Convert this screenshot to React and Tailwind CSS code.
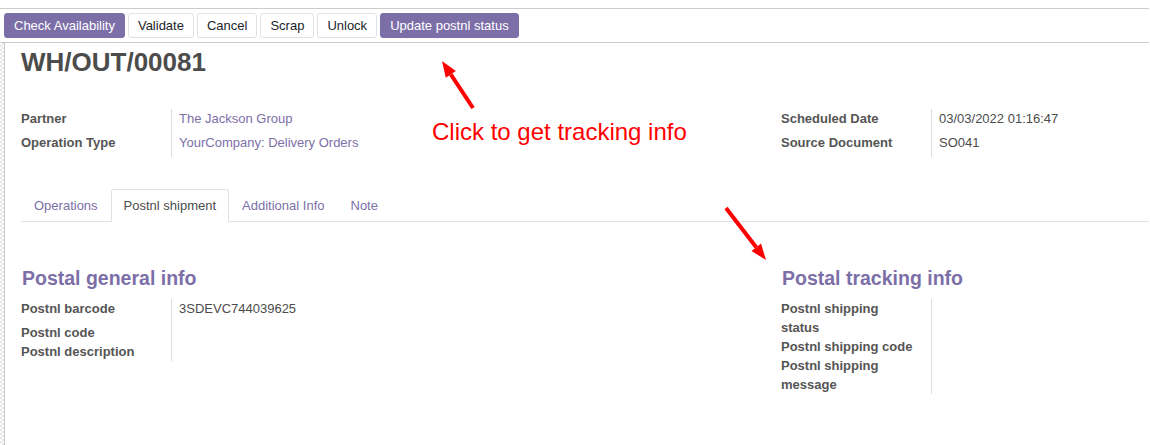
import React from 'react';

const PURPLE = 'text-[#7c6fa8]';

const buttons = [
  { label: 'Check Availability', primary: true },
  { label: 'Validate' },
  { label: 'Cancel' },
  { label: 'Scrap' },
  { label: 'Unlock' },
  { label: 'Update postnl status', primary: true },
];

const tabs = ['Operations', 'Postnl shipment', 'Additional Info', 'Note'];

function Field({ label, value, link, tall }) {
  return (
    <div className={`flex ${tall ? 'min-h-[24px]' : ''}`}>
      <div className="w-[150px] shrink-0 pr-[15px] font-bold leading-[19px] text-[#555555]">{label}</div>
      <div className={`flex-1 border-l border-[#dcdcdc] pl-[7px] leading-[19px] ${link ? PURPLE : 'text-[#4c4c4c]'}`}>
        {value}
      </div>
    </div>
  );
}

function Arrow({ tail, tip, base1, base2, baseC }) {
  return (
    <g>
      <line x1={tail[0]} y1={tail[1]} x2={baseC[0]} y2={baseC[1]} stroke="#ff0000" strokeWidth="4" />
      <polygon points={`${tip[0]},${tip[1]} ${base1[0]},${base1[1]} ${base2[0]},${base2[1]}`} fill="#ff0000" />
    </g>
  );
}

export default function App() {
  return (
    <div className="relative flex min-h-[445px] w-[1149px] flex-col bg-white font-['Liberation_Sans',Arial,sans-serif] text-[13px] text-[#4c4c4c]">
      {/* control panel */}
      <div className="h-[8px]" />
      <div className="flex gap-[3px] border-y border-[#cccccc] px-[4px] pt-[4px] pb-[4px]">
        {buttons.map(b => (
          <button
            key={b.label}
            className={`h-[25px] rounded-[3px] border px-[9px] leading-[23px] ${
              b.primary
                ? 'border-[#7c6fa8] bg-[#7c6fa8] text-white'
                : 'border-[#dee2e6] bg-white text-[#212529]'
            }`}
          >
            {b.label}
          </button>
        ))}
      </div>

      <div className="flex flex-1">
        {/* left sheet edge */}
        <div className="w-[5px] shrink-0 border-r border-[#c8c8c8] bg-[repeating-conic-gradient(#e6e6e6_0%_25%,#ffffff_0%_50%)] bg-[length:4px_4px]" />

        <div className="flex-1 pl-[16px]">
          <h1 className="mt-[4px] text-[26px] font-bold leading-[30px] text-[#4c4c4c]">WH/OUT/00081</h1>

          {/* main fields */}
          <div className="mt-[32px] flex">
            <div className="w-[760px]">
              <Field label="Partner" value="The Jackson Group" link tall />
              <Field label="Operation Type" value="YourCompany: Delivery Orders" link tall />
            </div>
            <div className="w-[360px]">
              <Field label="Scheduled Date" value="03/03/2022 01:16:47" tall />
              <Field label="Source Document" value="SO041" tall />
            </div>
          </div>

          {/* tabs */}
          <div className="mt-[32px] flex h-[33px] border-b border-[#dee2e6]">
            {tabs.map(t => {
              const active = t === 'Postnl shipment';
              return (
                <div
                  key={t}
                  className={`h-[33px] rounded-t-[3px] border px-[12px] pt-[6px] leading-[19.5px] ${
                    active ? 'border-[#dee2e6] border-b-white bg-white text-[#4c4c4c]' : `border-transparent ${PURPLE}`
                  }`}
                >
                  {t}
                </div>
              );
            })}
          </div>

          {/* postnl tab content */}
          <div className="mt-[44px] flex">
            <div className="w-[760px]">
              <h2 className={`pl-[1px] text-[19.5px] font-bold leading-[24px] ${PURPLE}`}>Postal general info</h2>
              <div className="mt-[9px]">
                <Field label="Postnl barcode" value="3SDEVC744039625" tall />
                <Field label="Postnl code" value="" />
                <Field label="Postnl description" value="" />
              </div>
            </div>
            <div className="w-[360px]">
              <h2 className={`pl-[1px] text-[19.5px] font-bold leading-[24px] ${PURPLE}`}>Postal tracking info</h2>
              <div className="mt-[9px]">
                <Field label="Postnl shipping status" value="" />
                <Field label="Postnl shipping code" value="" />
                <Field label="Postnl shipping message" value="" />
              </div>
            </div>
          </div>
        </div>
      </div>

      {/* annotation overlay */}
      <div className="pointer-events-none absolute left-[432px] top-[120px] text-[24px] leading-[24px] text-[#ff0000]">
        Click to get tracking info
      </div>
      <svg className="pointer-events-none absolute left-0 top-0" width="1149" height="445">
        <Arrow tail={[473, 108]} tip={[442, 61]} baseC={[450.8, 74.4]} base1={[455.8, 71.1]} base2={[445.8, 77.7]} />
        <Arrow tail={[726, 208]} tip={[766, 260]} baseC={[756.2, 247.3]} base1={[761, 243.6]} base2={[751.5, 251]} />
      </svg>
    </div>
  );
}
